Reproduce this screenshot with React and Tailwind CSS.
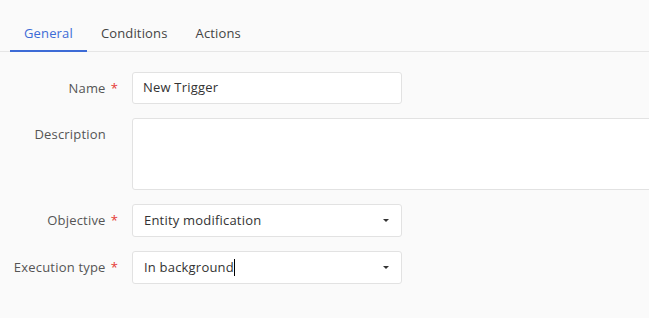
import { useState } from 'react';

const tabs = ['General', 'Conditions', 'Actions'];

function Caret() {
  return (
    <svg className="w-[6px] h-[3px] text-[#333]" viewBox="0 0 6 3" fill="currentColor">
      <polygon points="0,0 6,0 3,3" />
    </svg>
  );
}

function Row({ label, required, children }) {
  return (
    <div className="flex items-start">
      <div className="w-[118px] shrink-0 flex justify-end leading-[32px] text-[13px] tracking-[0.2px] text-[#555]">
        {label}
        {required && <span className="ml-[5px] text-[#e53935]">*</span>}
        {!required && <span className="w-[12px]" />}
      </div>
      <div className="ml-[14px] flex-1">{children}</div>
    </div>
  );
}

export default function App() {
  const [active, setActive] = useState('General');

  return (
    <div className="w-[649px] h-[318px] overflow-hidden bg-[#fafafa] font-['Open_Sans',sans-serif]">
      {/* Tabs */}
      <div className="pt-[17px] border-b border-[#e6e6e6] flex pl-[10px]">
        {tabs.map((t) => (
          <button
            key={t}
            onClick={() => setActive(t)}
            className={
              'h-[35px] px-[14px] text-[13px] tracking-[0.15px] -mb-px border-b-2 ' +
              (active === t
                ? 'border-[#3d6bd6] text-[#3d6bd6] font-medium'
                : 'border-transparent text-[#444]')
            }
          >
            {t}
          </button>
        ))}
      </div>

      {/* Form */}
      <div className="pt-[20px] flex flex-col gap-[14px]">
        <Row label="Name" required>
          <div className="w-[270px] h-[32px] bg-white border border-[#e2e2e2] rounded-[3px] flex items-center pl-[10px] text-[13px] tracking-[0.2px] text-[#333]">
            New Trigger
          </div>
        </Row>
        <Row label="Description">
          <div className="w-[540px] h-[72px] bg-white border border-[#e2e2e2] rounded-[3px]" />
        </Row>
        <Row label="Objective" required>
          <div className="w-[270px] h-[33px] bg-white border border-[#e2e2e2] rounded-[3px] flex items-center justify-between pl-[11px] pr-[12px] text-[13px] tracking-[0.2px] text-[#333]">
            <span>Entity modification</span>
            <Caret />
          </div>
        </Row>
        <Row label="Execution type" required>
          <div className="w-[270px] h-[33px] bg-white border border-[#e2e2e2] rounded-[3px] flex items-center justify-between pl-[11px] pr-[12px] text-[13px] tracking-[0.2px] text-[#333]">
            <span className="flex items-center">
              In background
              <span className="w-px h-[17px] bg-black" />
            </span>
            <Caret />
          </div>
        </Row>
      </div>
    </div>
  );
}
